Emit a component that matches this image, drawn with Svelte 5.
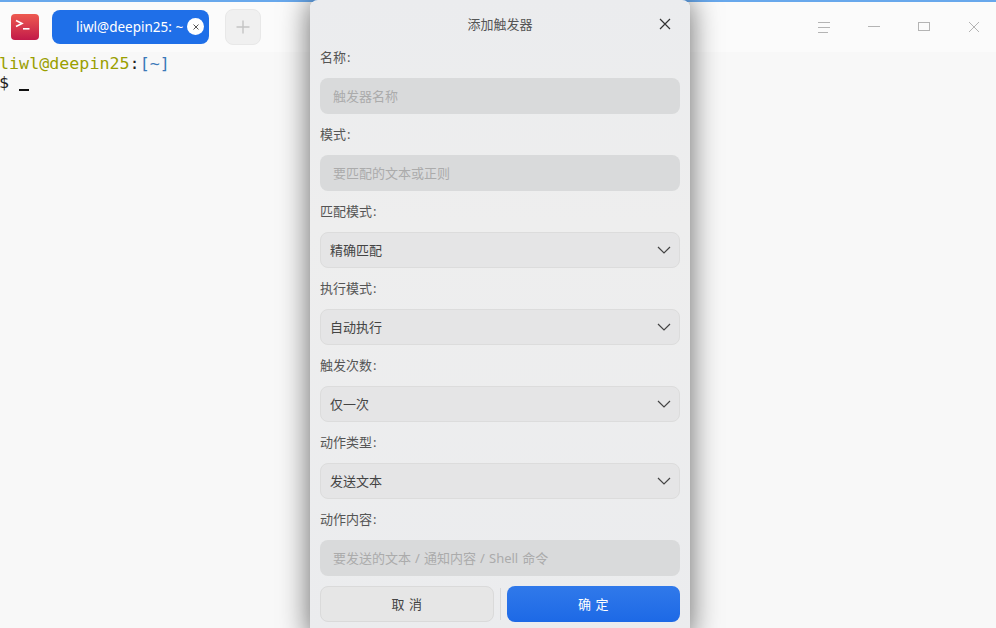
<script>
  const fields = [
    { label: "名称", kind: "input", text: "触发器名称" },
    { label: "模式", kind: "input", text: "要匹配的文本或正则" },
    { label: "匹配模式", kind: "select", text: "精确匹配" },
    { label: "执行模式", kind: "select", text: "自动执行" },
    { label: "触发次数", kind: "select", text: "仅一次" },
    { label: "动作类型", kind: "select", text: "发送文本" },
    { label: "动作内容", kind: "input", text: "要发送的文本 / 通知内容 / Shell 命令" },
  ];
</script>

<div class="window">
  <header class="titlebar">
    <div class="logo">
      <svg width="28" height="26" viewBox="0 0 28 26">
        <path d="M5 6.5 L11 9.5 L5 12.5" fill="none" stroke="#fff" stroke-width="1.6" />
        <rect x="12" y="14" width="6.5" height="1.6" fill="#fff" />
      </svg>
    </div>
    <div class="tab">
      <span class="tab-title">liwl@deepin25: ~</span>
      <span class="tab-close">
        <svg width="8" height="8" viewBox="0 0 8 8">
          <path d="M1.5 1.5 L6.5 6.5 M6.5 1.5 L1.5 6.5" stroke="#555" stroke-width="1" />
        </svg>
      </span>
    </div>
    <div class="add">
      <svg width="14" height="14" viewBox="0 0 14 14">
        <path d="M7 0.5 V13.5 M0.5 7 H13.5" stroke="#c4c4c4" stroke-width="1.4" />
      </svg>
    </div>
    <div class="controls">
      <button class="ctl" aria-label="菜单">
        <svg width="14" height="12" viewBox="0 0 14 12">
          <path d="M1 1.5 H13 M1 6.5 H13 M1 11.5 H11" stroke="#b4b4b4" stroke-width="1" />
        </svg>
      </button>
      <button class="ctl" aria-label="最小化">
        <svg width="14" height="12" viewBox="0 0 14 12">
          <path d="M1 5.5 H13" stroke="#b4b4b4" stroke-width="1" />
        </svg>
      </button>
      <button class="ctl" aria-label="最大化">
        <svg width="14" height="12" viewBox="0 0 14 12">
          <rect x="1.5" y="1.5" width="11" height="8" fill="none" stroke="#b4b4b4" stroke-width="1" />
        </svg>
      </button>
      <button class="ctl" aria-label="关闭">
        <svg width="14" height="12" viewBox="0 0 14 12">
          <path d="M2 1 L12 11 M12 1 L2 11" stroke="#b4b4b4" stroke-width="1" />
        </svg>
      </button>
    </div>
  </header>

  <div class="terminal">
    <div class="line"><span class="host">liwl@deepin25</span>:<span class="path">[~]</span></div>
    <div class="line">$ <span class="cursor"></span></div>
  </div>

  <div class="dialog">
    <div class="dialog-head">
      <span>添加触发器</span>
      <button class="dialog-close" aria-label="关闭">
        <svg width="12" height="12" viewBox="0 0 12 12">
          <path d="M1 1 L11 11 M11 1 L1 11" stroke="#333" stroke-width="1.2" />
        </svg>
      </button>
    </div>
    <div class="form">
      {#each fields as f}
        <div class="label">{f.label}<span class="colon">:</span></div>
        {#if f.kind == "input"}
          <div class="input"><span class="field-text">{f.text}</span></div>
        {:else}
          <div class="select">
            <span class="field-text">{f.text}</span>
            <svg width="14" height="8" viewBox="0 0 14 8">
              <path d="M1 1 L7 7 L13 1" fill="none" stroke="#444" stroke-width="1.2" />
            </svg>
          </div>
        {/if}
      {/each}
      <div class="buttons">
        <button class="btn cancel">取 消</button>
        <div class="sep"></div>
        <button class="btn ok">确 定</button>
      </div>
    </div>
  </div>
</div>

<style>
  :global(body) {
    overflow: hidden;
  }
  .window {
    position: relative;
    width: 996px;
    height: 628px;
    overflow: hidden;
    background: #f8f8f8;
    font-family: "Noto Sans", "Noto Sans CJK SC", sans-serif;
    display: flex;
    flex-direction: column;
  }
  .titlebar {
    height: 50px;
    flex: none;
    display: flex;
    align-items: center;
    background: #fbfbfb;
    border-top: 2px solid #68a8ec;
  }
  .logo {
    width: 28px;
    height: 26px;
    margin-left: 11px;
    border-radius: 4px;
    background: linear-gradient(180deg, #ee5a50, #c21a4a);
  }
  .tab {
    width: 157px;
    height: 34px;
    margin-left: 13px;
    border-radius: 8px;
    background: #1f6fe8;
    color: #fff;
    font-size: 13.5px;
    display: flex;
    align-items: center;
    box-sizing: border-box;
    padding-left: 24px;
    position: relative;
  }
  .tab-title {
    white-space: nowrap;
  }
  .tab-close {
    position: absolute;
    right: 5px;
    top: 8px;
    width: 17px;
    height: 17px;
    border-radius: 50%;
    background: #fff;
    display: flex;
    align-items: center;
    justify-content: center;
  }
  .add {
    width: 36px;
    height: 36px;
    margin-left: 16px;
    border-radius: 8px;
    background: #f0f0f0;
    border: 1px solid #e8e8e8;
    box-sizing: border-box;
    display: flex;
    align-items: center;
    justify-content: center;
  }
  .controls {
    margin-left: auto;
    display: flex;
    margin-right: -3px;
  }
  .ctl {
    width: 50px;
    height: 30px;
    padding: 0;
    border: 0;
    background: none;
    display: flex;
    align-items: center;
    justify-content: center;
  }
  .terminal {
    flex: 1;
    background: #f8f8f8;
    font-family: "DejaVu Sans Mono", monospace;
    font-size: 16.7px;
    line-height: 19px;
    padding-top: 2px;
    margin-left: -1px;
    color: #222;
  }
  .line {
    white-space: pre;
  }
  .host {
    color: #9a9f00;
  }
  .path {
    color: #3b78b8;
  }
  .cursor {
    display: inline-block;
    width: 10px;
    height: 2px;
    background: #111;
    vertical-align: -3px;
  }
  .dialog {
    position: absolute;
    left: 310px;
    top: 0;
    width: 380px;
    height: 640px;
    border-radius: 8px;
    background: linear-gradient(180deg, #ebecee, #eeeeee 35%, #ebecee);
    box-shadow: 0 0 30px rgba(0, 0, 0, 0.6);
    color: #555;
  }
  .dialog-head {
    height: 50px;
    box-sizing: border-box;
    padding-bottom: 3px;
    display: flex;
    align-items: center;
    justify-content: center;
    font-size: 13px;
    position: relative;
  }
  .dialog-close {
    position: absolute;
    right: 19px;
    top: 18px;
    padding: 0;
    border: 0;
    background: none;
    display: flex;
  }
  .form {
    padding: 0 10px;
  }
  .label {
    height: 28px;
    line-height: 15px;
    font-size: 13px;
  }
  .colon {
    margin-left: 1px;
  }
  .input,
  .select {
    height: 36px;
    box-sizing: border-box;
    border-radius: 8px;
    font-size: 13px;
    display: flex;
    align-items: center;
    margin-bottom: 13px;
  }
  .field-text {
    position: relative;
    top: -1px;
  }
  .input {
    background: #d9dadb;
    color: #ababab;
    padding-left: 13px;
    word-spacing: 0.7px;
  }
  .select {
    background: #e5e5e6;
    border: 1px solid #dcdcdc;
    color: #444;
    padding: 0 8px 0 9px;
    justify-content: space-between;
  }
  .buttons {
    display: flex;
    align-items: center;
    margin-top: -3px;
  }
  .btn {
    height: 36px;
    border-radius: 8px;
    font: inherit;
    font-size: 13px;
    letter-spacing: 0.6px;
    box-sizing: border-box;
    padding: 0 0 2px;
  }
  .cancel {
    width: 174px;
    background: #e6e6e6;
    border: 1px solid #dadada;
    color: #444;
  }
  .sep {
    width: 1px;
    height: 32px;
    margin: 0 6px;
    background: #d8d8d8;
  }
  .ok {
    flex: 1;
    border: 0;
    color: #fff;
    background: linear-gradient(180deg, #3079ea, #1d69e6);
  }
</style>
